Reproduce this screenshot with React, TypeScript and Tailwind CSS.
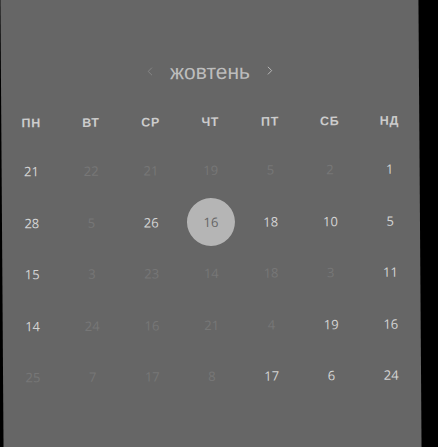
import { ChevronLeft, ChevronRight } from "lucide-react";

type Day = { n: number; on?: boolean; sel?: boolean };

const weekdays = ["пн", "вт", "ср", "чт", "пт", "сб", "нд"];

const weeks: Day[][] = [
  [{ n: 21, on: true }, { n: 22 }, { n: 21 }, { n: 19 }, { n: 5 }, { n: 2 }, { n: 1, on: true }],
  [{ n: 28, on: true }, { n: 5 }, { n: 26, on: true }, { n: 16, sel: true }, { n: 18, on: true }, { n: 10, on: true }, { n: 5, on: true }],
  [{ n: 15, on: true }, { n: 3 }, { n: 23 }, { n: 14 }, { n: 18 }, { n: 3 }, { n: 11, on: true }],
  [{ n: 14, on: true }, { n: 24 }, { n: 16 }, { n: 21 }, { n: 4 }, { n: 19, on: true }, { n: 16, on: true }],
  [{ n: 25 }, { n: 7 }, { n: 17 }, { n: 8 }, { n: 17, on: true }, { n: 6, on: true }, { n: 24, on: true }],
];

export default function App() {
  return (
    <div className="h-screen w-full overflow-hidden bg-black">
      <div className="-mt-[20px] ml-[2px] h-[490px] w-[418px] -rotate-[0.4deg] bg-[#666666] pt-[77px]">
        {/* Month switcher */}
        <div className="flex h-[28px] items-center justify-center gap-[13px] font-['Liberation_Sans',sans-serif]">
          <ChevronLeft size={14} strokeWidth={1.5} className="text-[#8a8a8a]" />
          <span className="text-[21px] leading-none text-[#bdbdbd]">жовтень</span>
          <ChevronRight size={14} strokeWidth={1.5} className="text-[#c4c4c4]" />
        </div>

        {/* Weekdays */}
        <div className="mt-[22px] grid h-[30px] grid-cols-7 items-center font-['Liberation_Sans',sans-serif]">
          {weekdays.map((d) => (
            <span
              key={d}
              className="text-center text-[12.5px] font-bold uppercase tracking-[0.6px] text-[#cccccc]"
            >
              {d}
            </span>
          ))}
        </div>

        {/* Days */}
        <div className="mt-[8px] font-['Open_Sans',sans-serif]">
          {weeks.map((week, i) => (
            <div key={i} className="grid h-[51.5px] grid-cols-7 items-center">
              {week.map((day, j) => (
                <div key={j} className="flex justify-center">
                  {day.sel ? (
                    <span className="flex h-[48px] w-[48px] items-center justify-center rounded-full bg-[#b5b5b5] text-[13px] text-[#666666]">
                      {day.n}
                    </span>
                  ) : (
                    <span
                      className={`text-[13px] ${
                        day.on ? "text-[#d4d4d4]" : "text-[#777777]"
                      }`}
                    >
                      {day.n}
                    </span>
                  )}
                </div>
              ))}
            </div>
          ))}
        </div>
      </div>
    </div>
  );
}
